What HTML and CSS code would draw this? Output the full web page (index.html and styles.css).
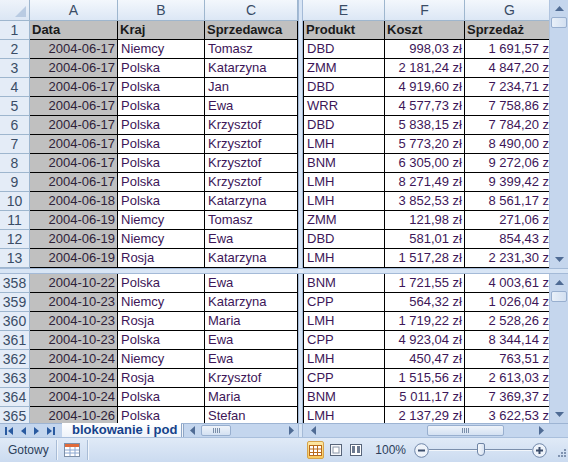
FILE: index.html
```html
<!DOCTYPE html>
<html lang="pl">
<head>
<meta charset="utf-8">
<title>Excel</title>
<link rel="stylesheet" href="styles.css">
</head>
<body>
<div class="app">
  <div class="section top">
    <div class="pane-left">
      <div class="corner"></div><div class="ch">A</div><div class="ch">B</div><div class="ch">C</div>
      <div class="rh">1</div><div class="c g b">Data</div><div class="c g b">Kraj</div><div class="c g b">Sprzedawca</div>
      <div class="rh">2</div><div class="c g r">2004-06-17</div><div class="c">Niemcy</div><div class="c">Tomasz</div>
      <div class="rh">3</div><div class="c g r">2004-06-17</div><div class="c">Polska</div><div class="c">Katarzyna</div>
      <div class="rh">4</div><div class="c g r">2004-06-17</div><div class="c">Polska</div><div class="c">Jan</div>
      <div class="rh">5</div><div class="c g r">2004-06-17</div><div class="c">Polska</div><div class="c">Ewa</div>
      <div class="rh">6</div><div class="c g r">2004-06-17</div><div class="c">Polska</div><div class="c">Krzysztof</div>
      <div class="rh">7</div><div class="c g r">2004-06-17</div><div class="c">Polska</div><div class="c">Krzysztof</div>
      <div class="rh">8</div><div class="c g r">2004-06-17</div><div class="c">Polska</div><div class="c">Krzysztof</div>
      <div class="rh">9</div><div class="c g r">2004-06-17</div><div class="c">Polska</div><div class="c">Krzysztof</div>
      <div class="rh">10</div><div class="c g r">2004-06-18</div><div class="c">Polska</div><div class="c">Katarzyna</div>
      <div class="rh">11</div><div class="c g r">2004-06-19</div><div class="c">Niemcy</div><div class="c">Tomasz</div>
      <div class="rh">12</div><div class="c g r">2004-06-19</div><div class="c">Niemcy</div><div class="c">Ewa</div>
      <div class="rh">13</div><div class="c g r">2004-06-19</div><div class="c">Rosja</div><div class="c">Katarzyna</div>
    </div>
    <div class="vsplit"></div>
    <div class="pane-right">
      <div class="ch">E</div><div class="ch">F</div><div class="ch">G</div>
      <div class="c g b e">Produkt</div><div class="c g b">Koszt</div><div class="c g b">Sprzedaż</div>
      <div class="c e">DBD</div><div class="c r">998,03 zł</div><div class="c r">1 691,57 zł</div>
      <div class="c e">ZMM</div><div class="c r">2 181,24 zł</div><div class="c r">4 847,20 zł</div>
      <div class="c e">DBD</div><div class="c r">4 919,60 zł</div><div class="c r">7 234,71 zł</div>
      <div class="c e">WRR</div><div class="c r">4 577,73 zł</div><div class="c r">7 758,86 zł</div>
      <div class="c e">DBD</div><div class="c r">5 838,15 zł</div><div class="c r">7 784,20 zł</div>
      <div class="c e">LMH</div><div class="c r">5 773,20 zł</div><div class="c r">8 490,00 zł</div>
      <div class="c e">BNM</div><div class="c r">6 305,00 zł</div><div class="c r">9 272,06 zł</div>
      <div class="c e">LMH</div><div class="c r">8 271,49 zł</div><div class="c r">9 399,42 zł</div>
      <div class="c e">LMH</div><div class="c r">3 852,53 zł</div><div class="c r">8 561,17 zł</div>
      <div class="c e">ZMM</div><div class="c r">121,98 zł</div><div class="c r">271,06 zł</div>
      <div class="c e">DBD</div><div class="c r">581,01 zł</div><div class="c r">854,43 zł</div>
      <div class="c e">LMH</div><div class="c r">1 517,28 zł</div><div class="c r">2 231,30 zł</div>
    </div>
    <div class="vscroll">
      <div class="sbtn"><svg width="9" height="5" viewBox="0 0 9 5"><path d="M0 5 L4.5 0 L9 5 Z" fill="#4f6b94"/></svg></div>
      <div class="vthumb"></div>
      <div class="vtrack"></div>
      <div class="sbtn"><svg width="9" height="5" viewBox="0 0 9 5"><path d="M0 0 L4.5 5 L9 0 Z" fill="#4f6b94"/></svg></div>
    </div>
  </div>

  <div class="hsplit">
    <div class="hs-left"></div><div class="hs-cross"></div><div class="hs-right"></div>
  </div>

  <div class="section bottom">
    <div class="pane-left">
      <div class="rh">358</div><div class="c g r">2004-10-22</div><div class="c">Polska</div><div class="c">Ewa</div>
      <div class="rh">359</div><div class="c g r">2004-10-23</div><div class="c">Niemcy</div><div class="c">Katarzyna</div>
      <div class="rh">360</div><div class="c g r">2004-10-23</div><div class="c">Rosja</div><div class="c">Maria</div>
      <div class="rh">361</div><div class="c g r">2004-10-23</div><div class="c">Polska</div><div class="c">Ewa</div>
      <div class="rh">362</div><div class="c g r">2004-10-24</div><div class="c">Niemcy</div><div class="c">Ewa</div>
      <div class="rh">363</div><div class="c g r">2004-10-24</div><div class="c">Rosja</div><div class="c">Krzysztof</div>
      <div class="rh">364</div><div class="c g r">2004-10-24</div><div class="c">Polska</div><div class="c">Maria</div>
      <div class="rh">365</div><div class="c g r">2004-10-26</div><div class="c">Polska</div><div class="c">Stefan</div>
    </div>
    <div class="vsplit"></div>
    <div class="pane-right">
      <div class="c e">BNM</div><div class="c r">1 721,55 zł</div><div class="c r">4 003,61 zł</div>
      <div class="c e">CPP</div><div class="c r">564,32 zł</div><div class="c r">1 026,04 zł</div>
      <div class="c e">LMH</div><div class="c r">1 719,22 zł</div><div class="c r">2 528,26 zł</div>
      <div class="c e">CPP</div><div class="c r">4 923,04 zł</div><div class="c r">8 344,14 zł</div>
      <div class="c e">LMH</div><div class="c r">450,47 zł</div><div class="c r">763,51 zł</div>
      <div class="c e">CPP</div><div class="c r">1 515,56 zł</div><div class="c r">2 613,03 zł</div>
      <div class="c e">BNM</div><div class="c r">5 011,17 zł</div><div class="c r">7 369,37 zł</div>
      <div class="c e">LMH</div><div class="c r">2 137,29 zł</div><div class="c r">3 622,53 zł</div>
    </div>
    <div class="vscroll">
      <div class="sbtn"><svg width="9" height="5" viewBox="0 0 9 5"><path d="M0 5 L4.5 0 L9 5 Z" fill="#4f6b94"/></svg></div>
      <div class="vthumb low"></div>
      <div class="vtrack"></div>
      <div class="sbtn"><svg width="9" height="5" viewBox="0 0 9 5"><path d="M0 0 L4.5 5 L9 0 Z" fill="#4f6b94"/></svg></div>
    </div>
  </div>

  <div class="tabbar">
    <div class="nav">
      <svg width="8" height="8" viewBox="0 0 8 8"><rect x="0" y="0" width="2" height="8" fill="#2a5aa0"/><path d="M8 0 L3 4 L8 8 Z" fill="#2a5aa0"/></svg>
      <svg width="5" height="8" viewBox="0 0 5 8"><path d="M5 0 L0 4 L5 8 Z" fill="#2a5aa0"/></svg>
      <svg width="5" height="8" viewBox="0 0 5 8"><path d="M0 0 L5 4 L0 8 Z" fill="#2a5aa0"/></svg>
      <svg width="8" height="8" viewBox="0 0 8 8"><path d="M0 0 L5 4 L0 8 Z" fill="#2a5aa0"/><rect x="6" y="0" width="2" height="8" fill="#2a5aa0"/></svg>
    </div>
    <div class="tab">blokowanie i pod</div>
    <div class="tabsplit"></div>
    <div class="hscroll left-h">
      <svg class="harrow" width="5" height="9" viewBox="0 0 5 9"><path d="M5 0 L0 4.5 L5 9 Z" fill="#4f6b94"/></svg>
      <div class="hthumb t1"><span class="grip"></span></div>
      <div class="htrack"></div>
      <svg class="harrow" width="5" height="9" viewBox="0 0 5 9"><path d="M0 0 L5 4.5 L0 9 Z" fill="#4f6b94"/></svg>
    </div>
    <div class="tabvsplit"></div>
    <div class="hscroll right-h">
      <svg class="harrow" width="5" height="9" viewBox="0 0 5 9"><path d="M5 0 L0 4.5 L5 9 Z" fill="#4f6b94"/></svg>
      <div class="htrack pre"></div>
      <div class="hthumb t2"><span class="grip"></span></div>
      <div class="htrack"></div>
      <svg class="harrow" width="5" height="9" viewBox="0 0 5 9"><path d="M0 0 L5 4.5 L0 9 Z" fill="#4f6b94"/></svg>
    </div>
    <div class="tabcorner"></div>
  </div>

  <div class="status">
    <div class="st-text">Gotowy</div>
    <div class="st-sep"></div>
    <div class="st-icon">
      <svg width="16" height="14" viewBox="0 0 16 14">
        <rect x="0.5" y="0.5" width="15" height="13" fill="#fff" stroke="#7d8fa8"/>
        <rect x="1" y="1" width="14" height="3" fill="#e06a3a"/>
        <path d="M1 7 H15 M1 10 H15 M6 4 V13 M11 4 V13" stroke="#8aa6d0" stroke-width="1"/>
      </svg>
    </div>
    <div class="st-sep"></div>
    <div class="st-fill"></div>
    <div class="views">
      <div class="vbtn on">
        <svg width="13" height="11" viewBox="0 0 13 11"><rect x="0.5" y="0.5" width="12" height="10" fill="#fff" stroke="#b86a1c"/><path d="M0.5 4 H12.5 M0.5 7.5 H12.5 M4.5 0.5 V10.5 M8.5 0.5 V10.5" stroke="#b86a1c"/></svg>
      </div>
      <div class="vbtn">
        <svg width="12" height="12" viewBox="0 0 12 12"><rect x="0.5" y="0.5" width="11" height="11" fill="#f4f6fa" stroke="#58657a"/><rect x="3" y="3" width="6" height="6" fill="#fff" stroke="#8a96a8"/></svg>
      </div>
      <div class="vbtn">
        <svg width="12" height="12" viewBox="0 0 12 12"><rect x="0.5" y="0.5" width="11" height="11" fill="#fff" stroke="#58657a"/><rect x="2" y="2" width="3" height="7" fill="#6d7a90"/><rect x="7" y="2" width="3" height="7" fill="#6d7a90"/></svg>
      </div>
    </div>
    <div class="zoom-pct">100%</div>
    <div class="zbtn"><svg width="15" height="15" viewBox="0 0 15 15"><circle cx="7.5" cy="7.5" r="6.8" fill="#eef3fa" stroke="#6f86a8"/><rect x="4" y="6.5" width="7" height="2" fill="#3d4f6c"/></svg></div>
    <div class="slider"><div class="sl-line"></div><div class="sl-tick"></div><div class="sl-thumb"></div></div>
    <div class="zbtn"><svg width="15" height="15" viewBox="0 0 15 15"><circle cx="7.5" cy="7.5" r="6.8" fill="#eef3fa" stroke="#6f86a8"/><rect x="4" y="6.5" width="7" height="2" fill="#3d4f6c"/><rect x="6.5" y="4" width="2" height="7" fill="#3d4f6c"/></svg></div>
    <div class="grip-corner">
      <svg width="10" height="10" viewBox="0 0 10 10" fill="#8093b0"><rect x="8" y="0" width="2" height="2"/><rect x="5" y="3" width="2" height="2"/><rect x="8" y="3" width="2" height="2"/><rect x="2" y="6" width="2" height="2"/><rect x="5" y="6" width="2" height="2"/><rect x="8" y="6" width="2" height="2"/></svg>
    </div>
  </div>
</div>
</body>
</html>
```
FILE: styles.css
```css
* { box-sizing: border-box; }
html, body { margin: 0; padding: 0; }
body {
  width: 568px;
  height: 462px;
  overflow: hidden;
  background: #fff;
  font-family: "Liberation Sans", Arial, sans-serif;
}
.app {
  display: flex;
  flex-direction: column;
  width: 568px;
  height: 462px;
}
.section { display: flex; }
.top { height: 268px; }
.bottom { height: 149px; overflow: hidden; }

.pane-left {
  display: grid;
  grid-template-columns: 30px 88px 87px 93px;
  grid-auto-rows: 19px;
  align-content: start;
  width: 298px;
  overflow: hidden;
}
.top .pane-left { grid-template-rows: 21px; }
.pane-right {
  display: grid;
  grid-template-columns: 82px 80px 90px;
  grid-auto-rows: 19px;
  align-content: start;
  width: 246px;
  overflow: hidden;
}
.top .pane-right { grid-template-rows: 21px; }

.corner {
  background: linear-gradient(#eef3fa, #dbe6f4);
  border-right: 1px solid #9eb6ce;
  border-bottom: 1px solid #9eb6ce;
  position: relative;
}
.corner::after {
  content: "";
  position: absolute;
  right: 3px;
  bottom: 3px;
  width: 0;
  height: 0;
  border-left: 11px solid transparent;
  border-bottom: 11px solid #b9cbe2;
}
.ch {
  background: linear-gradient(#f3f7fc, #dce7f5);
  border-right: 1px solid #9eb6ce;
  border-bottom: 1px solid #9eb6ce;
  text-align: center;
  font-size: 14px;
  line-height: 20px;
  color: #3a4c66;
}
.rh {
  background: #e4ecf7;
  border-right: 1px solid #9eb6ce;
  border-bottom: 1px solid #9eb6ce;
  text-align: center;
  font-size: 14px;
  line-height: 18px;
  color: #3a4c66;
}
.c {
  border-right: 1px solid #000;
  border-bottom: 1px solid #000;
  font-size: 13px;
  line-height: 18px;
  padding: 0 3px;
  white-space: nowrap;
  overflow: hidden;
  color: #3d1658;
}
.g { background: #c0c0c0; }
.b { font-weight: bold; color: #1a1a1a; padding-left: 2px; }
.r { text-align: right; padding-right: 2px; }
.c.g.r { color: #2e2238; }
.e { border-left: 1px solid #000; }

.vsplit {
  width: 5px;
  background: #d8e5f5;
  border-left: 1px solid #a4bad7;
  border-right: 1px solid #a4bad7;
}

.vscroll {
  width: 19px;
  display: flex;
  flex-direction: column;
  background: #c5d6ed;
  border-left: 1px solid #b0c4df;
}
.sbtn {
  height: 17px;
  display: flex;
  align-items: center;
  justify-content: center;
  flex: none;
}
.vthumb {
  height: 11px;
  margin: 0 1px;
  flex: none;
  border: 1px solid #98afcf;
  border-radius: 2px;
  background: linear-gradient(90deg, #e9f0f9, #d3e0f1);
}
.vthumb.low { margin-top: 0; }
.vtrack { flex: 1; }

.hsplit {
  height: 6px;
  display: flex;
  background: #d8e5f5;
  border-top: 1px solid #a4bad7;
  border-bottom: 1px solid #a4bad7;
}
.hs-left { width: 298px; }
.hs-cross { width: 5px; background: #e3ecf8; }
.hs-right { flex: 1; }

.tabbar {
  height: 14px;
  display: flex;
  align-items: stretch;
  background: #c4d6ee;
  border-top: 1px solid #9db4d3;
}
.nav {
  width: 62px;
  display: flex;
  align-items: center;
  gap: 8px;
  padding-left: 5px;
  flex: none;
}
.tab {
  width: 119px;
  flex: none;
  background: linear-gradient(#ffffff, #eef3fa);
  color: #15428b;
  font-weight: bold;
  font-size: 13px;
  line-height: 13px;
  padding-left: 10px;
  white-space: nowrap;
  overflow: hidden;
  margin-top: -1px;
}
.tabsplit {
  width: 3px;
  flex: none;
  background: #f2f5fa;
  border-left: 1px solid #8ea6c6;
  border-right: 1px solid #8ea6c6;
}
.hscroll {
  display: flex;
  align-items: center;
  background: #c4d6ee;
}
.left-h { width: 114px; padding: 0 4px 0 6px; }
.right-h { width: 246px; padding: 0 5px 0 8px; }
.harrow { flex: none; }
.htrack { flex: 1; }
.htrack.pre { flex: none; width: 111px; }
.hthumb {
  height: 11px;
  border: 1px solid #98afcf;
  border-radius: 2px;
  background: linear-gradient(#eef3fa, #d4e1f2);
  display: flex;
  align-items: center;
  justify-content: center;
  flex: none;
}
.t1 { width: 30px; margin-left: 6px; }
.t2 { width: 77px; }
.grip {
  width: 7px;
  height: 5px;
  background: repeating-linear-gradient(90deg, #7a8ea9 0 1px, transparent 1px 2px);
}
.tabvsplit {
  width: 5px;
  flex: none;
  background: #d8e5f5;
  border-left: 1px solid #a4bad7;
  border-right: 1px solid #a4bad7;
}
.tabcorner { flex: 1; background: #c4d6ee; }

.status {
  flex: 1;
  display: flex;
  align-items: center;
  background: linear-gradient(#e0eaf7, #cbdbf0);
  border-top: 1px solid #a9bfdc;
}
.st-text {
  font-size: 12px;
  color: #2c3e5a;
  padding-left: 8px;
  width: 56px;
}
.st-sep {
  width: 1px;
  height: 20px;
  background: #a8bcd6;
  box-shadow: 1px 0 0 #f1f6fc;
}
.st-icon {
  width: 30px;
  display: flex;
  justify-content: center;
}
.st-fill { flex: 1; }
.views {
  display: flex;
  align-items: center;
  gap: 3px;
  margin-right: 11px;
}
.vbtn {
  width: 17px;
  height: 18px;
  display: flex;
  align-items: center;
  justify-content: center;
}
.vbtn.on {
  background: linear-gradient(#fde8a6, #f8c95e);
  border: 1px solid #d6a34a;
  border-radius: 2px;
}
.zoom-pct {
  font-size: 12px;
  color: #2c3e5a;
  margin-right: 8px;
}
.zbtn { display: flex; align-items: center; }
.slider {
  width: 103px;
  height: 16px;
  position: relative;
}
.sl-line {
  position: absolute;
  left: 0;
  right: 0;
  top: 7px;
  height: 2px;
  background: #7b8fac;
  border-bottom: 1px solid #f2f6fb;
}
.sl-tick {
  position: absolute;
  left: 51px;
  top: 4px;
  width: 1px;
  height: 8px;
  background: #7b8fac;
}
.sl-thumb {
  position: absolute;
  left: 48px;
  top: 1px;
  width: 8px;
  height: 13px;
  background: linear-gradient(90deg, #f7f9fc, #d7e2f1);
  border: 1px solid #6e84a5;
  border-radius: 2px 2px 4px 4px;
}
.grip-corner {
  width: 21px;
  display: flex;
  justify-content: flex-end;
  align-items: flex-end;
  align-self: flex-end;
  padding: 0 2px 3px 0;
}
```
